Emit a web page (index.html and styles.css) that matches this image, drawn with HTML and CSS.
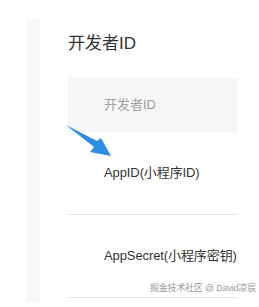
FILE: index.html
```html
<!DOCTYPE html>
<html lang="zh">
<head>
<meta charset="utf-8">
<link rel="stylesheet" href="styles.css">
</head>
<body>
<div class="page">
  <div class="strip"></div>
  <div class="content">
    <div class="title">开发者ID</div>
    <div class="field-head">开发者ID</div>
    <div class="row">AppID(小程序ID)</div>
    <div class="row">AppSecret(小程序密钥)</div>
  </div>
</div>
<svg class="arrow" width="259" height="307" viewBox="0 0 259 307">
  <polygon points="66,125 97,141 101,138 111,156 90,152 94,147" fill="#2f8de4"/>
</svg>
<div class="watermark">掘金技术社区 @ David凉宸</div>
</body>
</html>
```

FILE: styles.css
```css
html, body {
  margin: 0;
  padding: 0;
  background: #ffffff;
}
body {
  width: 259px;
  height: 307px;
  position: relative;
  overflow: hidden;
  font-family: "Liberation Sans", "Noto Sans CJK SC", sans-serif;
}
.page {
  display: flex;
  padding: 19px 0 0 27px;
}
.strip {
  width: 13px;
  height: 283px;
  background: #f6f7f8;
  flex: none;
}
.content {
  margin-left: 28px;
  width: 170px;
}
.title {
  margin-top: 15px;
  font-size: 17px;
  line-height: 20px;
  color: #333333;
}
.field-head {
  margin-top: 24px;
  height: 54px;
  line-height: 54px;
  padding-left: 36px;
  background: #f5f6f8;
  font-size: 13px;
  color: #a0a0a0;
}
.row {
  height: 82px;
  line-height: 82px;
  padding-left: 36px;
  border-bottom: 1px solid #e6e6e6;
  font-size: 13px;
  color: #333333;
  white-space: nowrap;
  letter-spacing: -0.1px;
}
.arrow {
  position: absolute;
  left: 0;
  top: 0;
}
.watermark {
  position: absolute;
  left: 150px;
  top: 282px;
  font-size: 9px;
  line-height: 12px;
  color: #9a9a9a;
  white-space: nowrap;
  letter-spacing: -0.2px;
}
```
